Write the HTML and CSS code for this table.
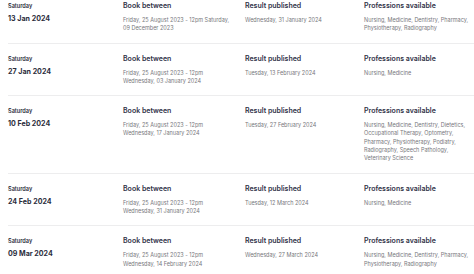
FILE: index.html
```html
<!DOCTYPE html>
<html>
<head>
<meta charset="utf-8">
<link rel="stylesheet" href="styles.css">
</head>
<body>
<div class="list">
  <div class="row">
    <div class="when"><div class="day">Saturday</div><div class="date">13 Jan 2024</div></div>
    <div class="cell"><div class="label">Book between</div><div class="text">Friday, 25 August 2023 - 12pm Saturday, 09 December 2023</div></div>
    <div class="cell"><div class="label">Result published</div><div class="text">Wednesday, 31 January 2024</div></div>
    <div class="cell"><div class="label">Professions available</div><div class="text">Nursing, Medicine, Dentistry, Pharmacy, Physiotherapy, Radiography</div></div>
  </div>
  <div class="row">
    <div class="when"><div class="day">Saturday</div><div class="date">27 Jan 2024</div></div>
    <div class="cell"><div class="label">Book between</div><div class="text">Friday, 25 August 2023 - 12pm Wednesday, 03 January 2024</div></div>
    <div class="cell"><div class="label">Result published</div><div class="text">Tuesday, 13 February 2024</div></div>
    <div class="cell"><div class="label">Professions available</div><div class="text">Nursing, Medicine</div></div>
  </div>
  <div class="row">
    <div class="when"><div class="day">Saturday</div><div class="date">10 Feb 2024</div></div>
    <div class="cell"><div class="label">Book between</div><div class="text">Friday, 25 August 2023 - 12pm Wednesday, 17 January 2024</div></div>
    <div class="cell"><div class="label">Result published</div><div class="text">Tuesday, 27 February 2024</div></div>
    <div class="cell"><div class="label">Professions available</div><div class="text">Nursing, Medicine, Dentistry, Dietetics, Occupational Therapy, Optometry, Pharmacy, Physiotherapy, Podiatry, Radiography, Speech Pathology, Veterinary Science</div></div>
  </div>
  <div class="row">
    <div class="when"><div class="day">Saturday</div><div class="date">24 Feb 2024</div></div>
    <div class="cell"><div class="label">Book between</div><div class="text">Friday, 25 August 2023 - 12pm Wednesday, 31 January 2024</div></div>
    <div class="cell"><div class="label">Result published</div><div class="text">Tuesday, 12 March 2024</div></div>
    <div class="cell"><div class="label">Professions available</div><div class="text">Nursing, Medicine</div></div>
  </div>
  <div class="row">
    <div class="when"><div class="day">Saturday</div><div class="date">09 Mar 2024</div></div>
    <div class="cell"><div class="label">Book between</div><div class="text">Friday, 25 August 2023 - 12pm Wednesday, 14 February 2024</div></div>
    <div class="cell"><div class="label">Result published</div><div class="text">Wednesday, 27 March 2024</div></div>
    <div class="cell"><div class="label">Professions available</div><div class="text">Nursing, Medicine, Dentistry, Pharmacy, Physiotherapy, Radiography</div></div>
  </div>
</div>
</body>
</html>
```
FILE: styles.css
```css
html, body {
  margin: 0;
  padding: 0;
  background: #ffffff;
  font-family: Inter, "Noto Sans", sans-serif;
  overflow: hidden;
}
.list {
  margin-top: -10px;
  padding-left: 8px;
}
.row {
  display: grid;
  grid-template-columns: 115px 122px 119px 110px;
  padding: 11px 0 10px;
  border-top: 1px solid #ededee;
}
.row:first-child {
  border-top-color: transparent;
}
.day {
  font-size: 5.6px;
  font-weight: 600;
  color: #2e3040;
  line-height: 8px;
}
.date {
  font-size: 7.1px;
  font-weight: 700;
  color: #2b2d3c;
  line-height: 10px;
  margin-top: 4px;
}
.label {
  font-size: 7px;
  font-weight: 600;
  color: #2f3147;
  line-height: 8px;
}
.text {
  font-size: 5.5px;
  color: #77777c;
  line-height: 8.3px;
  margin-top: 6px;
  width: 108px;
}
.cell:nth-child(4) .text {
  width: 110px;
}
```
